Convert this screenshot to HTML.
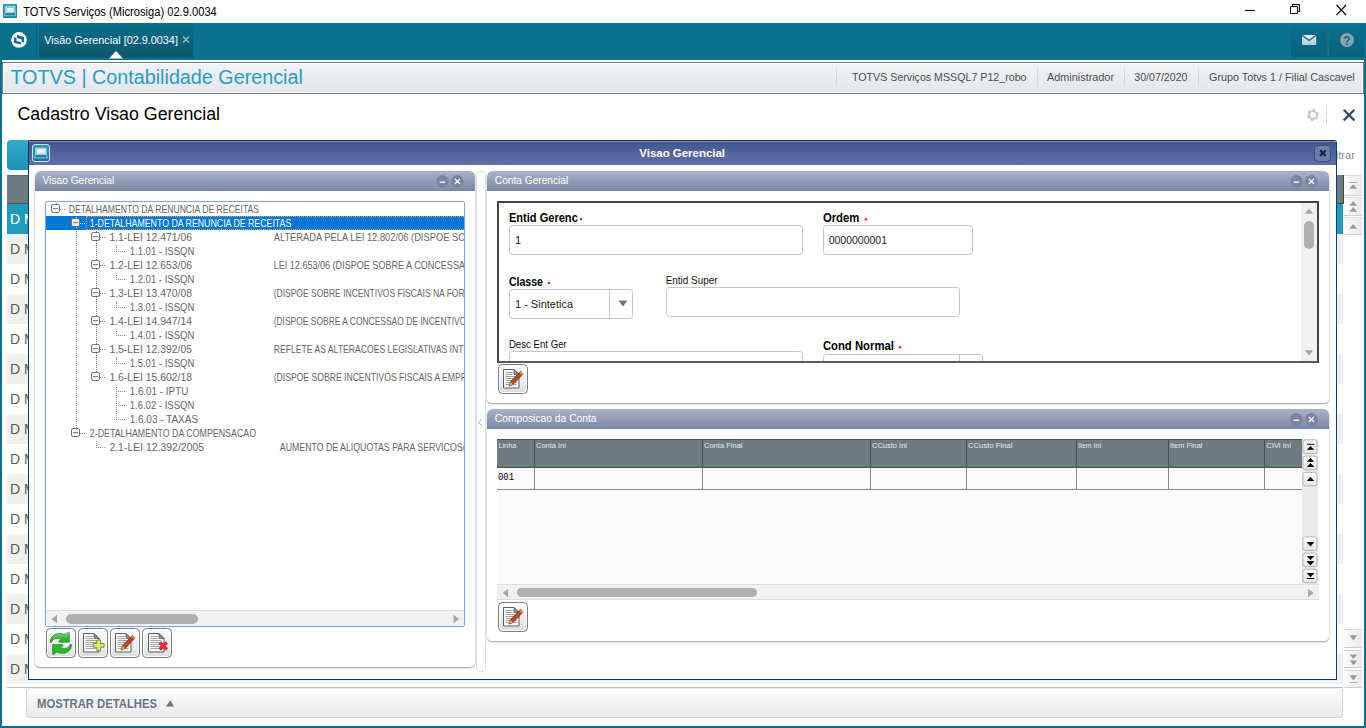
<!DOCTYPE html>
<html lang="pt-BR"><head><meta charset="utf-8"><title>TOTVS Serviços (Microsiga) 02.9.0034</title>
<style>
*{box-sizing:border-box;margin:0;padding:0}
html,body{width:1366px;height:728px;overflow:hidden;background:#fff}
body{position:relative;font-family:"Liberation Sans",sans-serif;font-size:12px;color:#000}
.a{position:absolute}
svg{position:absolute;left:0;top:0;overflow:visible}
svg text{font-family:"Liberation Sans",sans-serif;white-space:pre}
</style></head><body>
<div class="a" style="left:0px;top:0px;width:1366px;height:23px;background:#fff"></div>
<svg width="1366" height="728" viewBox="0 0 1366 728"><defs><linearGradient id="tg" x1="0" y1="0" x2="0" y2="1"><stop offset="0" stop-color="#249dbf"/><stop offset="1" stop-color="#0b789b"/></linearGradient><linearGradient id="sg" x1="0" y1="0" x2="0" y2="1"><stop offset="0" stop-color="#fff"/><stop offset="1" stop-color="#e4e4e4"/></linearGradient></defs><rect x="3" y="4" width="14" height="14" rx="0.800" fill="url(#tg)"/><path d="M5.200 6.300h9.800l0.200 6.200h-10.200z" fill="#8cc6d8" stroke="#c9e6ef" stroke-width="0.600"/><rect x="6.600" y="8" width="6.800" height="4" fill="url(#sg)"/><path d="M5 12.600h10.200l0.800 3.200h-11.800z" fill="#1586a8" stroke="#bfe0ea" stroke-width="0.700"/></svg>
<svg width="1366" height="728" viewBox="0 0 1366 728"><text x="23.2" y="16" font-size="12" fill="#000" textLength="193.6" lengthAdjust="spacingAndGlyphs">TOTVS Serviços (Microsiga) 02.9.0034</text><path d="M1245 10.500h10" stroke="#000" stroke-width="1" fill="none"/><path d="M1290.500 6.500h7v7h-7z M1292.500 6.500v-2h7v7h-2" stroke="#000" stroke-width="1" fill="none"/><path d="M1336.500 5l9.500 10M1346 5l-9.500 10" stroke="#000" stroke-width="1.100" fill="none"/></svg>
<div class="a" style="left:0px;top:23px;width:1366px;height:705px;background:#0a728e"></div>
<div class="a" style="left:0px;top:23px;width:37px;height:35px;background:linear-gradient(#0b7490,#0a6c87);border-right:1px solid #096079"></div>
<div class="a" style="left:39px;top:23px;width:154px;height:35px;background:linear-gradient(#0a6f8b,#0b566d)"></div>
<div class="a" style="left:1291px;top:23px;width:37px;height:34px;background:linear-gradient(#0a718e,#07627c);border-right:1px solid #34606f"></div>
<div class="a" style="left:1329px;top:23px;width:35px;height:34px;background:linear-gradient(#0a718e,#07627c)"></div>
<svg width="1366" height="728" viewBox="0 0 1366 728"><defs><linearGradient id="mg" x1="0" y1="0" x2="0" y2="1"><stop offset="0" stop-color="#e2ecf1"/><stop offset="1" stop-color="#b9cdd6"/></linearGradient></defs><circle cx="19" cy="39.900" r="7.800" fill="#fff"/><path d="M16.900 35.100L24 36.900V42.500L21.700 41.900V39.400L16.900 38.100Z M13.900 37.200L16.500 37.900V40.900L20.900 42V44.500L13.900 42.700Z" fill="#0a6f8b"/><path d="M109 58.500l7 -7.500l7 7.500z" fill="#fff"/><rect x="1302" y="35" width="14.200" height="10.100" rx="1.300" fill="url(#mg)"/><path d="M1302 35.200l7.100 5.300l7.100 -5.300" stroke="#0a6a86" stroke-width="1.400" fill="none"/><circle cx="1347" cy="40" r="7" fill="#89a2af"/><text x="1347" y="44.5" font-size="12" fill="#0a6882" font-weight="bold" text-anchor="middle">?</text><text x="44.3" y="44" font-size="11" fill="#fff" textLength="133.6" lengthAdjust="spacingAndGlyphs">Visão Gerencial [02.9.0034]</text><path d="M183 36.500l6 6M189 36.500l-6 6" stroke="#a5c6d2" stroke-width="1.100" fill="none"/></svg>
<div class="a" style="left:2px;top:60px;width:1362px;height:666px;background:#fff"></div>
<div class="a" style="left:2px;top:62px;width:1362px;height:32px;background:linear-gradient(#f1f3f6,#e2e6ea);border:1px solid #7a7a7a;box-shadow:inset 0 0 0 1px #fafbfc"></div>
<div class="a" style="left:836px;top:68px;width:1px;height:18px;background:#d6dade"></div>
<div class="a" style="left:1037px;top:68px;width:1px;height:18px;background:#d6dade"></div>
<div class="a" style="left:1124px;top:68px;width:1px;height:18px;background:#d6dade"></div>
<div class="a" style="left:1198px;top:68px;width:1px;height:18px;background:#d6dade"></div>
<svg width="1366" height="728" viewBox="0 0 1366 728"><text x="10.4" y="83.7" font-size="20" fill="#2a9cc5" textLength="292.5" lengthAdjust="spacingAndGlyphs">TOTVS | Contabilidade Gerencial</text><text x="852" y="81.2" font-size="11" fill="#4e4e4e" textLength="174.5" lengthAdjust="spacingAndGlyphs">TOTVS Serviços MSSQL7 P12_robo</text><text x="1047" y="81.2" font-size="11" fill="#4e4e4e" textLength="67" lengthAdjust="spacingAndGlyphs">Administrador</text><text x="1134.3" y="81.2" font-size="11" fill="#4e4e4e" textLength="53.2" lengthAdjust="spacingAndGlyphs">30/07/2020</text><text x="1209" y="81.2" font-size="11" fill="#4e4e4e" textLength="145.6" lengthAdjust="spacingAndGlyphs">Grupo Totvs 1 / Filial Cascavel</text><text x="17.5" y="119.5" font-size="17.5" fill="#000" textLength="202.5" lengthAdjust="spacingAndGlyphs">Cadastro Visao Gerencial</text><circle cx="1313" cy="115" r="3.900" fill="none" stroke="#c5c7cb" stroke-width="1.900"/><path d="M1313.63 111.45L1314.04 109.09M1316.38 113.77L1318.64 112.95M1315.76 117.31L1317.60 118.86M1312.37 118.55L1311.96 120.91M1309.62 116.23L1307.36 117.05M1310.24 112.69L1308.40 111.14" stroke="#c5c7cb" stroke-width="2.600" fill="none"/><path d="M1326.500 106v17" stroke="#b4b9c2" stroke-width="1" stroke-dasharray="1 1"/><path d="M1343.700 109.700l10.700 10.700M1354.400 109.700l-10.700 10.700" stroke="#3a4960" stroke-width="2.300" fill="none"/></svg>
<div class="a" style="left:7px;top:140px;width:60px;height:30px;border-radius:4px;background:linear-gradient(#35abc9,#1b93b6)"></div>
<svg width="1366" height="728" viewBox="0 0 1366 728"><text x="1354.8" y="158.8" font-size="11" fill="#7b8aa0" text-anchor="end">Filtrar</text></svg>
<div class="a" style="left:7px;top:175px;width:1336px;height:29px;background:#6d7c81;border-top:1px solid #5d6a6e;border-bottom:1px solid #4a5356"></div>
<div class="a" style="left:7px;top:204px;width:1336px;height:30px;background:#1f9bbd"></div>
<div class="a" style="left:7px;top:234px;width:1336px;height:30px;background:#f0f0f0"></div>
<div class="a" style="left:7px;top:264px;width:1336px;height:30px;background:#fff"></div>
<div class="a" style="left:7px;top:294px;width:1336px;height:30px;background:#f0f0f0"></div>
<div class="a" style="left:7px;top:324px;width:1336px;height:30px;background:#fff"></div>
<div class="a" style="left:7px;top:354px;width:1336px;height:30px;background:#f0f0f0"></div>
<div class="a" style="left:7px;top:384px;width:1336px;height:30px;background:#fff"></div>
<div class="a" style="left:7px;top:414px;width:1336px;height:30px;background:#f0f0f0"></div>
<div class="a" style="left:7px;top:444px;width:1336px;height:30px;background:#fff"></div>
<div class="a" style="left:7px;top:474px;width:1336px;height:30px;background:#f0f0f0"></div>
<div class="a" style="left:7px;top:504px;width:1336px;height:30px;background:#fff"></div>
<div class="a" style="left:7px;top:534px;width:1336px;height:30px;background:#f0f0f0"></div>
<div class="a" style="left:7px;top:564px;width:1336px;height:30px;background:#fff"></div>
<div class="a" style="left:7px;top:594px;width:1336px;height:30px;background:#f0f0f0"></div>
<div class="a" style="left:7px;top:624px;width:1336px;height:30px;background:#fff"></div>
<div class="a" style="left:7px;top:654px;width:1336px;height:30px;background:#f0f0f0"></div>
<div class="a" style="left:7px;top:684px;width:1336px;height:4px;background:#fff"></div>
<svg width="1366" height="728" viewBox="0 0 1366 728"><text x="10" y="224.1" font-size="14" fill="#fff">D M</text><text x="10" y="254.1" font-size="14" fill="#5a5a5a">D M</text><text x="10" y="284.1" font-size="14" fill="#5a5a5a">D M</text><text x="10" y="314.1" font-size="14" fill="#5a5a5a">D M</text><text x="10" y="344.1" font-size="14" fill="#5a5a5a">D M</text><text x="10" y="374.1" font-size="14" fill="#5a5a5a">D M</text><text x="10" y="404.1" font-size="14" fill="#5a5a5a">D M</text><text x="10" y="434.1" font-size="14" fill="#5a5a5a">D M</text><text x="10" y="464.1" font-size="14" fill="#5a5a5a">D M</text><text x="10" y="494.1" font-size="14" fill="#5a5a5a">D M</text><text x="10" y="524.1" font-size="14" fill="#5a5a5a">D M</text><text x="10" y="554.1" font-size="14" fill="#5a5a5a">D M</text><text x="10" y="584.1" font-size="14" fill="#5a5a5a">D M</text><text x="10" y="614.1" font-size="14" fill="#5a5a5a">D M</text><text x="10" y="644.1" font-size="14" fill="#5a5a5a">D M</text><text x="10" y="674.1" font-size="14" fill="#5a5a5a">D M</text></svg>
<div class="a" style="left:7px;top:687px;width:1336px;height:1px;background:#bbb"></div>
<div class="a" style="left:1337px;top:175px;width:7px;height:29px;background:#6d7c81;border-right:1px solid #444;border-bottom:1px solid #444"></div>
<div class="a" style="left:1344px;top:175px;width:18px;height:513px;background:#fff"></div>
<div class="a" style="left:1344px;top:175px;width:18px;height:20.5px;background:linear-gradient(90deg,#fbfbfb,#e9e9e9);border-top:1px solid #d9d9d9;border-bottom:1px solid #cfcfcf"></div>
<div class="a" style="left:1344px;top:197px;width:18px;height:18.5px;background:linear-gradient(90deg,#fbfbfb,#e9e9e9);border-top:1px solid #d9d9d9;border-bottom:1px solid #cfcfcf"></div>
<div class="a" style="left:1344px;top:217px;width:18px;height:17.5px;background:linear-gradient(90deg,#fbfbfb,#e9e9e9);border-top:1px solid #d9d9d9;border-bottom:1px solid #cfcfcf"></div>
<div class="a" style="left:1344px;top:628.5px;width:18px;height:19.5px;background:linear-gradient(90deg,#fbfbfb,#e9e9e9);border-top:1px solid #d9d9d9;border-bottom:1px solid #cfcfcf"></div>
<div class="a" style="left:1344px;top:649.5px;width:18px;height:18.5px;background:linear-gradient(90deg,#fbfbfb,#e9e9e9);border-top:1px solid #d9d9d9;border-bottom:1px solid #cfcfcf"></div>
<div class="a" style="left:1344px;top:670px;width:18px;height:17.5px;background:linear-gradient(90deg,#fbfbfb,#e9e9e9);border-top:1px solid #d9d9d9;border-bottom:1px solid #cfcfcf"></div>
<svg width="1366" height="728" viewBox="0 0 1366 728"><g fill="#9b9b9b"><path d="M1349 182h8v0.800h-8z M1353.200 184.200l3.900 4.600h-7.800z"/><path d="M1353.200 201l3.900 4.700h-7.800z M1353.200 207l3.900 4.700h-7.800z"/><path d="M1353.200 224l3.900 4.700h-7.800z"/><path d="M1353.400 640.500l3.800 -5.200h-7.600z"/><path d="M1353.400 659l3.800 -4.600h-7.600z M1353.400 665.200l3.800 -4.800h-7.600z"/><path d="M1353.400 680.500l3.800 -5.200h-7.600z M1349.500 682h7.800v0.800h-7.800z"/></g></svg>
<div class="a" style="left:26px;top:688px;width:1317px;height:30px;background:linear-gradient(#fcfcfc,#ebebeb);border:1px solid #d4d4d4;border-top-color:#ececec;border-radius:4px"></div>
<svg width="1366" height="728" viewBox="0 0 1366 728"><text x="37" y="707.5" font-size="12" fill="#66748a" font-weight="bold" textLength="120" lengthAdjust="spacingAndGlyphs">MOSTRAR DETALHES</text><path d="M166 706.500l4.100 -6.300l4.100 6.300z" fill="#66748a"/></svg>
<div class="a" style="left:28px;top:140px;width:1309px;height:540px;background:#fff;border:1px solid #0c3c6c;border-top-color:#2a2a2a;border-radius:2px 3px 0 0"></div>
<div class="a" style="left:29px;top:141px;width:1307px;height:24px;background:linear-gradient(#405590,#5f70a6);border-radius:1px 2px 0 0"></div>
<div class="a" style="left:29px;top:141px;width:1307px;height:1px;background:#8591bd"></div>
<div class="a" style="left:28px;top:142px;width:1px;height:23px;background:#2e2e2e"></div>
<svg width="1366" height="728" viewBox="0 0 1366 728"><rect x="32.500" y="144.500" width="17" height="17" rx="2.500" fill="url(#tg)" stroke="#dcdfec" stroke-width="1"/><path d="M35.600 148h10.600l0.300 6.300h-11.200z" fill="#8fcadb" stroke="#d3ebf2" stroke-width="0.600"/><rect x="37" y="149.300" width="8.100" height="4.500" fill="url(#sg)"/><path d="M35.300 154.500h11.200l0.800 3.400h-12.800z" fill="#1485a8" stroke="#c7e4ec" stroke-width="0.700"/></svg>
<div class="a" style="left:1314px;top:144.5px;width:17px;height:17.5px;border:1px solid #3a4b7c;border-radius:4px;background:#6d7db0"></div>
<svg width="1366" height="728" viewBox="0 0 1366 728"><text x="639.3" y="156.8" font-size="11" fill="#fff" font-weight="bold" textLength="85.7" lengthAdjust="spacingAndGlyphs">Visao Gerencial</text><path d="M1320.100 150.300l5.600 5.600M1325.700 150.300l-5.600 5.600" stroke="#1c2444" stroke-width="2.200" fill="none"/></svg>
<div class="a" style="left:35px;top:171px;width:439.5px;height:496px;background:#fff;border-radius:6px 6px 5px 5px;box-shadow:0 1px 2px rgba(0,0,0,.4)"></div>
<div class="a" style="left:35px;top:171px;width:439.5px;height:19.8px;border-radius:6px 6px 0 0;background:linear-gradient(#a9b3c8,#7a88a7)"></div>
<svg width="1366" height="728" viewBox="0 0 1366 728"><circle cx="442.4" cy="181.4" r="6.300" fill="#7886a3"/><circle cx="457.4" cy="181.4" r="6.300" fill="#7886a3"/><path d="M439.7 182.2h5.400" stroke="#fff" stroke-width="1.300"/><path d="M454.8 178.8l5.200 5.200M460 178.8l-5.200 5.200" stroke="#fff" stroke-width="1.200"/><text x="42.5" y="183.9" font-size="11.5" fill="#fff" textLength="71.8" lengthAdjust="spacingAndGlyphs">Visao Gerencial</text></svg>
<div class="a" style="left:487px;top:171px;width:842px;height:232px;background:#fff;border-radius:6px 6px 5px 5px;box-shadow:0 1px 2px rgba(0,0,0,.4)"></div>
<div class="a" style="left:487px;top:171px;width:842px;height:19.8px;border-radius:6px 6px 0 0;background:linear-gradient(#a9b3c8,#7a88a7)"></div>
<svg width="1366" height="728" viewBox="0 0 1366 728"><circle cx="1296.4" cy="181.4" r="6.300" fill="#7886a3"/><circle cx="1311.4" cy="181.4" r="6.300" fill="#7886a3"/><path d="M1293.7 182.2h5.400" stroke="#fff" stroke-width="1.300"/><path d="M1308.8 178.8l5.200 5.200M1314 178.8l-5.200 5.200" stroke="#fff" stroke-width="1.200"/><text x="494.8" y="184.2" font-size="11.5" fill="#fff" textLength="73.5" lengthAdjust="spacingAndGlyphs">Conta Gerencial</text></svg>
<div class="a" style="left:487px;top:409px;width:842px;height:232px;background:#fff;border-radius:6px 6px 5px 5px;box-shadow:0 1px 2px rgba(0,0,0,.4)"></div>
<div class="a" style="left:487px;top:409px;width:842px;height:19.8px;border-radius:6px 6px 0 0;background:linear-gradient(#a9b3c8,#7a88a7)"></div>
<svg width="1366" height="728" viewBox="0 0 1366 728"><circle cx="1296.4" cy="419.4" r="6.300" fill="#7886a3"/><circle cx="1311.4" cy="419.4" r="6.300" fill="#7886a3"/><path d="M1293.7 420.2h5.400" stroke="#fff" stroke-width="1.300"/><path d="M1308.8 416.8l5.200 5.200M1314 416.8l-5.200 5.200" stroke="#fff" stroke-width="1.200"/><text x="494.8" y="422.3" font-size="11.5" fill="#fff" textLength="101.8" lengthAdjust="spacingAndGlyphs">Composicao da Conta</text></svg>
<div class="a" style="left:476px;top:171px;width:9.5px;height:500.5px;background:#fff;border:1px solid #e0e0e0;border-radius:4px"></div>
<svg width="1366" height="728" viewBox="0 0 1366 728"><path d="M482 419L478.300 422.400L482 425.900" stroke="#bcaebc" stroke-width="1" fill="none"/></svg>
<div class="a" style="left:45px;top:201px;width:420px;height:426px;background:#fff;border:1px solid #7aa6f0;border-radius:2px"></div>
<div class="a" style="left:46px;top:216px;width:418px;height:14px;background:#0078d7"></div>
<div class="a" style="left:86px;top:216px;width:378px;height:14px;border:1px dotted #e8a040;border-right:none"></div>
<svg width="1366" height="728" viewBox="0 0 1366 728"><defs><clipPath id="tc"><rect x="46" y="202" width="418" height="408.500"/></clipPath></defs><g clip-path="url(#tc)"><path d="M76.500 231V428" stroke="#8c8c8c" stroke-width="1" stroke-dasharray="1 1"/><path d="M96.500 241V372" stroke="#8c8c8c" stroke-width="1" stroke-dasharray="1 1"/><path d="M56.5 203v2" stroke="#8c8c8c" stroke-width="1"/><path d="M60 209.5h5" stroke="#8c8c8c" stroke-width="1" stroke-dasharray="1 1"/><rect x="51.5" y="204.5" width="8" height="8" rx="1.500" fill="#fdfdfd" stroke="#727272" stroke-width="1"/><path d="M53 208.5h5" stroke="#8a8a8a" stroke-width="1"/><path d="M53 209.5h5" stroke="#dcdcdc" stroke-width="1"/><text x="68.7" y="213" font-size="10.5" fill="#666" textLength="190.4" lengthAdjust="spacingAndGlyphs">DETALHAMENTO DA RENUNCIA DE RECEITAS</text><path d="M76.5 217v11" stroke="#d8e6f8" stroke-width="1"/><path d="M80 223.5h5" stroke="#d8e6f8" stroke-width="1" stroke-dasharray="1 1"/><rect x="71.5" y="218.5" width="8" height="8" rx="1.500" fill="#ececec" stroke="#727272" stroke-width="1"/><path d="M73 222.5h5" stroke="#8a8a8a" stroke-width="1"/><path d="M73 223.5h5" stroke="#dcdcdc" stroke-width="1"/><text x="89.8" y="227" font-size="10.5" fill="#fff" textLength="201.5" lengthAdjust="spacingAndGlyphs">1-DETALHAMENTO DA RENUNCIA DE RECEITAS</text><path d="M96.5 231v11" stroke="#8c8c8c" stroke-width="1"/><path d="M100 237.5h5" stroke="#8c8c8c" stroke-width="1" stroke-dasharray="1 1"/><rect x="91.5" y="232.5" width="8" height="8" rx="1.500" fill="#fdfdfd" stroke="#727272" stroke-width="1"/><path d="M93 236.5h5" stroke="#8a8a8a" stroke-width="1"/><path d="M93 237.5h5" stroke="#dcdcdc" stroke-width="1"/><text x="109.4" y="241" font-size="10.5" fill="#666" textLength="82.6" lengthAdjust="spacingAndGlyphs">1.1-LEI 12.471/06</text><text x="273.7" y="241" font-size="10.5" fill="#666" textLength="191.8" lengthAdjust="spacingAndGlyphs">ALTERADA PELA LEI 12.802/06 (DISPOE SO</text><path d="M116.500 245V252" stroke="#8c8c8c" stroke-width="1" stroke-dasharray="1 1"/><path d="M116 251.5h9" stroke="#8c8c8c" stroke-width="1" stroke-dasharray="1 1"/><text x="129.7" y="255" font-size="10.5" fill="#666" textLength="64.7" lengthAdjust="spacingAndGlyphs">1.1.01 - ISSQN</text><path d="M96.5 259v11" stroke="#8c8c8c" stroke-width="1"/><path d="M100 265.5h5" stroke="#8c8c8c" stroke-width="1" stroke-dasharray="1 1"/><rect x="91.5" y="260.5" width="8" height="8" rx="1.500" fill="#fdfdfd" stroke="#727272" stroke-width="1"/><path d="M93 264.5h5" stroke="#8a8a8a" stroke-width="1"/><path d="M93 265.5h5" stroke="#dcdcdc" stroke-width="1"/><text x="109.4" y="269" font-size="10.5" fill="#666" textLength="82.6" lengthAdjust="spacingAndGlyphs">1.2-LEI 12.653/06</text><text x="273.7" y="269" font-size="10.5" fill="#666" textLength="191.3" lengthAdjust="spacingAndGlyphs">LEI 12.653/06 (DISPOE SOBRE A CONCESSA</text><path d="M116.500 273V280" stroke="#8c8c8c" stroke-width="1" stroke-dasharray="1 1"/><path d="M116 279.5h9" stroke="#8c8c8c" stroke-width="1" stroke-dasharray="1 1"/><text x="129.7" y="283" font-size="10.5" fill="#666" textLength="64.7" lengthAdjust="spacingAndGlyphs">1.2.01 - ISSQN</text><path d="M96.5 287v11" stroke="#8c8c8c" stroke-width="1"/><path d="M100 293.5h5" stroke="#8c8c8c" stroke-width="1" stroke-dasharray="1 1"/><rect x="91.5" y="288.5" width="8" height="8" rx="1.500" fill="#fdfdfd" stroke="#727272" stroke-width="1"/><path d="M93 292.5h5" stroke="#8a8a8a" stroke-width="1"/><path d="M93 293.5h5" stroke="#dcdcdc" stroke-width="1"/><text x="109.4" y="297" font-size="10.5" fill="#666" textLength="82.6" lengthAdjust="spacingAndGlyphs">1.3-LEI 13.470/08</text><text x="273.7" y="297" font-size="10.5" fill="#666" textLength="190.9" lengthAdjust="spacingAndGlyphs">(DISPOE SOBRE INCENTIVOS FISCAIS NA FOR</text><path d="M116.500 301V308" stroke="#8c8c8c" stroke-width="1" stroke-dasharray="1 1"/><path d="M116 307.5h9" stroke="#8c8c8c" stroke-width="1" stroke-dasharray="1 1"/><text x="129.7" y="311" font-size="10.5" fill="#666" textLength="64.7" lengthAdjust="spacingAndGlyphs">1.3.01 - ISSQN</text><path d="M96.5 315v11" stroke="#8c8c8c" stroke-width="1"/><path d="M100 321.5h5" stroke="#8c8c8c" stroke-width="1" stroke-dasharray="1 1"/><rect x="91.5" y="316.5" width="8" height="8" rx="1.500" fill="#fdfdfd" stroke="#727272" stroke-width="1"/><path d="M93 320.5h5" stroke="#8a8a8a" stroke-width="1"/><path d="M93 321.5h5" stroke="#dcdcdc" stroke-width="1"/><text x="109.4" y="325" font-size="10.5" fill="#666" textLength="82.6" lengthAdjust="spacingAndGlyphs">1.4-LEI 14.947/14</text><text x="273.7" y="325" font-size="10.5" fill="#666" textLength="192.6" lengthAdjust="spacingAndGlyphs">(DISPOE SOBRE A CONCESSAO DE INCENTIVO</text><path d="M116.500 329V336" stroke="#8c8c8c" stroke-width="1" stroke-dasharray="1 1"/><path d="M116 335.5h9" stroke="#8c8c8c" stroke-width="1" stroke-dasharray="1 1"/><text x="129.7" y="339" font-size="10.5" fill="#666" textLength="64.7" lengthAdjust="spacingAndGlyphs">1.4.01 - ISSQN</text><path d="M96.5 343v11" stroke="#8c8c8c" stroke-width="1"/><path d="M100 349.5h5" stroke="#8c8c8c" stroke-width="1" stroke-dasharray="1 1"/><rect x="91.5" y="344.5" width="8" height="8" rx="1.500" fill="#fdfdfd" stroke="#727272" stroke-width="1"/><path d="M93 348.5h5" stroke="#8a8a8a" stroke-width="1"/><path d="M93 349.5h5" stroke="#dcdcdc" stroke-width="1"/><text x="109.4" y="353" font-size="10.5" fill="#666" textLength="82.6" lengthAdjust="spacingAndGlyphs">1.5-LEI 12.392/05</text><text x="273.7" y="353" font-size="10.5" fill="#666" textLength="189.8" lengthAdjust="spacingAndGlyphs">REFLETE AS ALTERACOES LEGISLATIVAS INT</text><path d="M116.500 357V364" stroke="#8c8c8c" stroke-width="1" stroke-dasharray="1 1"/><path d="M116 363.5h9" stroke="#8c8c8c" stroke-width="1" stroke-dasharray="1 1"/><text x="129.7" y="367" font-size="10.5" fill="#666" textLength="64.7" lengthAdjust="spacingAndGlyphs">1.5.01 - ISSQN</text><path d="M96.5 371v2" stroke="#8c8c8c" stroke-width="1"/><path d="M100 377.5h5" stroke="#8c8c8c" stroke-width="1" stroke-dasharray="1 1"/><rect x="91.5" y="372.5" width="8" height="8" rx="1.500" fill="#fdfdfd" stroke="#727272" stroke-width="1"/><path d="M93 376.5h5" stroke="#8a8a8a" stroke-width="1"/><path d="M93 377.5h5" stroke="#dcdcdc" stroke-width="1"/><text x="109.4" y="381" font-size="10.5" fill="#666" textLength="82.6" lengthAdjust="spacingAndGlyphs">1.6-LEI 15.602/18</text><text x="273.7" y="381" font-size="10.5" fill="#666" textLength="193.3" lengthAdjust="spacingAndGlyphs">(DISPOE SOBRE INCENTIVOS FISCAIS A EMPR</text><path d="M116.500 385V399" stroke="#8c8c8c" stroke-width="1" stroke-dasharray="1 1"/><path d="M116 391.5h9" stroke="#8c8c8c" stroke-width="1" stroke-dasharray="1 1"/><text x="129.7" y="395" font-size="10.5" fill="#666" textLength="58.6" lengthAdjust="spacingAndGlyphs">1.6.01 - IPTU</text><path d="M116.500 399V413" stroke="#8c8c8c" stroke-width="1" stroke-dasharray="1 1"/><path d="M116 405.5h9" stroke="#8c8c8c" stroke-width="1" stroke-dasharray="1 1"/><text x="129.7" y="409" font-size="10.5" fill="#666" textLength="64.7" lengthAdjust="spacingAndGlyphs">1.6.02 - ISSQN</text><path d="M116.500 413V420" stroke="#8c8c8c" stroke-width="1" stroke-dasharray="1 1"/><path d="M116 419.5h9" stroke="#8c8c8c" stroke-width="1" stroke-dasharray="1 1"/><text x="129.7" y="423" font-size="10.5" fill="#666" textLength="68.4" lengthAdjust="spacingAndGlyphs">1.6.03 - TAXAS</text><path d="M76.5 427v2" stroke="#8c8c8c" stroke-width="1"/><path d="M80 433.5h5" stroke="#8c8c8c" stroke-width="1" stroke-dasharray="1 1"/><rect x="71.5" y="428.5" width="8" height="8" rx="1.500" fill="#fdfdfd" stroke="#727272" stroke-width="1"/><path d="M73 432.5h5" stroke="#8a8a8a" stroke-width="1"/><path d="M73 433.5h5" stroke="#dcdcdc" stroke-width="1"/><text x="89.8" y="437" font-size="10.5" fill="#666" textLength="166.3" lengthAdjust="spacingAndGlyphs">2-DETALHAMENTO DA COMPENSACAO</text><path d="M96.500 441V448" stroke="#8c8c8c" stroke-width="1" stroke-dasharray="1 1"/><path d="M96 447.5h9" stroke="#8c8c8c" stroke-width="1" stroke-dasharray="1 1"/><text x="109.4" y="451" font-size="10.5" fill="#666" textLength="94.7" lengthAdjust="spacingAndGlyphs">2.1-LEI 12.392/2005</text><text x="279.8" y="451" font-size="10.5" fill="#666" textLength="185.2" lengthAdjust="spacingAndGlyphs">AUMENTO DE ALIQUOTAS PARA SERVICOS/</text></g></svg>
<div class="a" style="left:46px;top:610px;width:418px;height:16px;background:#f1f1f1;border-top:1px solid #dedede"></div>
<div class="a" style="left:66px;top:614.3px;width:132px;height:9.4px;background:#b0b0b0;border-radius:5px"></div>
<svg width="1366" height="728" viewBox="0 0 1366 728"><path d="M57 614.800l-5.500 4.200l5.500 4.300z M453.500 614.800l5.500 4.200l-5.500 4.300z" fill="#a3a3a3"/></svg>
<div class="a" style="left:46px;top:628px;width:30px;height:30px;border:1px solid #7c7c7c;border-radius:4.500px;background:linear-gradient(#fefefe,#dedede);box-shadow:inset 0 0 0 1px #fff"></div>
<div class="a" style="left:78px;top:628px;width:30px;height:30px;border:1px solid #7c7c7c;border-radius:4.500px;background:linear-gradient(#fefefe,#dedede);box-shadow:inset 0 0 0 1px #fff"></div>
<div class="a" style="left:110px;top:628px;width:30px;height:30px;border:1px solid #7c7c7c;border-radius:4.500px;background:linear-gradient(#fefefe,#dedede);box-shadow:inset 0 0 0 1px #fff"></div>
<div class="a" style="left:142px;top:628px;width:30px;height:30px;border:1px solid #7c7c7c;border-radius:4.500px;background:linear-gradient(#fefefe,#dedede);box-shadow:inset 0 0 0 1px #fff"></div>
<svg width="1366" height="728" viewBox="0 0 1366 728"><defs><linearGradient id="gg" x1="0" y1="0" x2="0" y2="1"><stop offset="0" stop-color="#8be08b"/><stop offset="0.600" stop-color="#2fba2f"/><stop offset="1" stop-color="#25ad25"/></linearGradient></defs><g transform="translate(44,626)"><path d="M6.100 16.300Q6.300 11 10.500 8.600Q15 6.200 21.200 8.500L24.600 6L25.300 6.600V16.200H15.500L14.600 15L17.600 13.600Q14 11.300 10.500 12.800Q8.300 14 7.400 16.600Z" fill="url(#gg)" stroke="#3a7a4a" stroke-width="0.700"/><path d="M6.100 16.300Q6.300 11 10.500 8.600Q15 6.200 21.200 8.500L24.600 6L25.300 6.600V16.200H15.500L14.600 15L17.600 13.600Q14 11.300 10.500 12.800Q8.300 14 7.400 16.600Z" transform="rotate(180 16.900 17.400)" fill="#2cb62c" stroke="#3a7a4a" stroke-width="0.700"/></g><g transform="translate(83,633)"><path d="M0.500 0.500h10.500l5 5v13.500h-15.500z" fill="#fbfbfb" stroke="#5f5f5f" stroke-width="1"/><path d="M11 0.500v5h5z" fill="#8c8c8c" stroke="#5f5f5f" stroke-width="0.800"/><path d="M2.500 3.500h7M2.500 5.500h7M2.500 7.500h11M2.500 9.500h11M2.500 11.500h11M2.500 13.500h11M2.500 15.500h11" stroke="#9a9a9a" stroke-width="0.900"/><path d="M13.800 7h3.600v3.600h3.600v3.600h-3.600v3.600h-3.600v-3.600h-3.600v-3.600h3.600z" fill="#dcf466" stroke="#6b7a55" stroke-width="0.900"/></g><g transform="translate(115,633)"><path d="M0.500 0.500h10.500l5 5v13.500h-15.500z" fill="#fbfbfb" stroke="#5f5f5f" stroke-width="1"/><path d="M11 0.500v5h5z" fill="#8c8c8c" stroke="#5f5f5f" stroke-width="0.800"/><path d="M2.500 3.500h7M2.500 5.500h7M2.500 7.500h11M2.500 9.500h11M2.500 11.500h11M2.500 13.500h11M2.500 15.500h11" stroke="#9a9a9a" stroke-width="0.900"/><path d="M6 17l1.500 -4.200l10 -10.500l2.700 2.600l-10 10.500z" fill="#b5482c" stroke="#7a2d18" stroke-width="0.700"/><path d="M6 17l1.500 -4.200l2.700 2.600z" fill="#f0c070" stroke="#8a5a20" stroke-width="0.500"/><path d="M16.300 3.600l2.700 2.600l1.300-1.400l-2.700-2.600z" fill="#d9a050"/></g><g transform="translate(148,633)"><path d="M0.500 0.500h10.500l5 5v13.500h-15.500z" fill="#fbfbfb" stroke="#5f5f5f" stroke-width="1"/><path d="M11 0.500v5h5z" fill="#8c8c8c" stroke="#5f5f5f" stroke-width="0.800"/><path d="M2.500 3.500h7M2.500 5.500h7M2.500 7.500h11M2.500 9.500h11M2.500 11.500h11M2.500 13.500h11M2.500 15.500h11" stroke="#9a9a9a" stroke-width="0.900"/><path d="M11.800 9.500l7 7M18.800 9.500l-7 7" stroke="#a03a44" stroke-width="3.400"/><path d="M11.800 9.500l7 7M18.800 9.500l-7 7" stroke="#f42a3c" stroke-width="2.300"/></g></svg>
<div class="a" style="left:497px;top:201px;width:822px;height:162px;background:#fff;border:2px solid #444;border-bottom-color:#5a5a5a;overflow:hidden">
<div class="a" style="left:10px;top:22px;width:294px;height:30px;border:1px solid #c6c6c6;border-radius:3.500px;background:#fff"></div>
<div class="a" style="left:324px;top:22px;width:150px;height:30px;border:1px solid #c6c6c6;border-radius:3.500px;background:#fff"></div>
<div class="a" style="left:10px;top:86px;width:124px;height:30px;border:1px solid #c6c6c6;border-radius:3.500px;background:#fff"><div class="a" style="left:99px;top:0;width:1px;height:28px;background:#c6c6c6"></div></div>
<div class="a" style="left:167px;top:84px;width:294px;height:30px;border:1px solid #c6c6c6;border-radius:3.500px;background:#fff"></div>
<div class="a" style="left:10px;top:148px;width:294px;height:30px;border:1px solid #c6c6c6;border-radius:3.500px;background:#fff"></div>
<div class="a" style="left:324px;top:151px;width:160px;height:30px;border:1px solid #c6c6c6;border-radius:3.500px;background:#fff"><div class="a" style="left:135px;top:0;width:1px;height:28px;background:#c6c6c6"></div></div>
<svg width="818" height="158" viewBox="499 203 818 158" style="left:0;top:0"><text x="515" y="244" font-size="11" fill="#1a1020">1</text><text x="828.7" y="244" font-size="11" fill="#1c1c1c" textLength="58.3" lengthAdjust="spacingAndGlyphs">0000000001</text><text x="515" y="307.8" font-size="11" fill="#1c1c1c" textLength="58" lengthAdjust="spacingAndGlyphs">1 - Sintetica</text><path d="M618.500 300.500h9l-4.500 6z" fill="#6b7280"/><text x="508.9" y="222" font-size="12.5" fill="#000" font-weight="bold" textLength="68.9" lengthAdjust="spacingAndGlyphs">Entid Gerenc</text><text x="822.9" y="222" font-size="12.5" fill="#000" font-weight="bold" textLength="36.5" lengthAdjust="spacingAndGlyphs">Ordem</text><text x="508.9" y="285.7" font-size="12.5" fill="#000" font-weight="bold" textLength="34" lengthAdjust="spacingAndGlyphs">Classe</text><text x="822.9" y="350" font-size="12.5" fill="#000" font-weight="bold" textLength="71" lengthAdjust="spacingAndGlyphs">Cond Normal</text><text x="665.7" y="284.4" font-size="11" fill="#111" textLength="51.8" lengthAdjust="spacingAndGlyphs">Entid Super</text><text x="508.9" y="348" font-size="11" fill="#111" textLength="57.9" lengthAdjust="spacingAndGlyphs">Desc Ent Ger</text><g fill="#f5204a"><circle cx="581" cy="219" r="1.300"/><circle cx="866" cy="219.300" r="1.300"/><circle cx="549" cy="283" r="1.300"/><circle cx="900" cy="347.300" r="1.300"/></g><rect x="1301" y="203" width="17" height="159" fill="#f1f1f1"/><path d="M1309 208.600l4.100 5.200h-8.200z M1309 355.500l4.100 -5.300h-8.200z" fill="#a3a3a3"/><rect x="1304" y="221" width="10" height="28" rx="5" fill="#b0b0b0"/></svg>
</div>
<div class="a" style="left:498px;top:364px;width:30px;height:30px;border:1px solid #7c7c7c;border-radius:4.500px;background:linear-gradient(#fefefe,#dedede);box-shadow:inset 0 0 0 1px #fff"></div>
<svg width="1366" height="728" viewBox="0 0 1366 728"><g transform="translate(503,369)"><path d="M0.500 0.500h10.500l5 5v13.500h-15.500z" fill="#fbfbfb" stroke="#5f5f5f" stroke-width="1"/><path d="M11 0.500v5h5z" fill="#8c8c8c" stroke="#5f5f5f" stroke-width="0.800"/><path d="M2.500 3.500h7M2.500 5.500h7M2.500 7.500h11M2.500 9.500h11M2.500 11.500h11M2.500 13.500h11M2.500 15.500h11" stroke="#9a9a9a" stroke-width="0.900"/><path d="M6 17l1.500 -4.200l10 -10.500l2.700 2.600l-10 10.500z" fill="#b5482c" stroke="#7a2d18" stroke-width="0.700"/><path d="M6 17l1.500 -4.200l2.700 2.600z" fill="#f0c070" stroke="#8a5a20" stroke-width="0.500"/><path d="M16.300 3.600l2.700 2.600l1.300-1.400l-2.700-2.600z" fill="#d9a050"/></g></svg>
<div class="a" style="left:497px;top:439px;width:822px;height:161px;background:#fafafa"></div>
<div class="a" style="left:497px;top:439px;width:805px;height:29px;background:#6e7c81;border-top:1px solid #4a565a"></div>
<svg width="1366" height="728" viewBox="0 0 1366 728"><path d="M534.5 440V467" stroke="#465155" stroke-width="1"/><path d="M534.5 468V489" stroke="#8a8a8a" stroke-width="1"/><path d="M702.5 440V467" stroke="#465155" stroke-width="1"/><path d="M702.5 468V489" stroke="#8a8a8a" stroke-width="1"/><path d="M870.5 440V467" stroke="#465155" stroke-width="1"/><path d="M870.5 468V489" stroke="#8a8a8a" stroke-width="1"/><path d="M966.5 440V467" stroke="#465155" stroke-width="1"/><path d="M966.5 468V489" stroke="#8a8a8a" stroke-width="1"/><path d="M1076.5 440V467" stroke="#465155" stroke-width="1"/><path d="M1076.5 468V489" stroke="#8a8a8a" stroke-width="1"/><path d="M1168.5 440V467" stroke="#465155" stroke-width="1"/><path d="M1168.5 468V489" stroke="#8a8a8a" stroke-width="1"/><path d="M1264.5 440V467" stroke="#465155" stroke-width="1"/><path d="M1264.5 468V489" stroke="#8a8a8a" stroke-width="1"/><path d="M497 467.500H1302" stroke="#465155" stroke-width="1"/><path d="M497 489.500H1302" stroke="#8a8a8a" stroke-width="1"/><text x="498.4" y="448.1" font-size="8" fill="#e4e9ea" textLength="18" lengthAdjust="spacingAndGlyphs">Linha</text><text x="536" y="448.1" font-size="8" fill="#e4e9ea" textLength="29.9" lengthAdjust="spacingAndGlyphs">Conta Ini</text><text x="704" y="448.1" font-size="8" fill="#e4e9ea" textLength="38.5" lengthAdjust="spacingAndGlyphs">Conta Final</text><text x="872" y="448.1" font-size="8" fill="#e4e9ea" textLength="35" lengthAdjust="spacingAndGlyphs">CCusto Ini</text><text x="968" y="448.1" font-size="8" fill="#e4e9ea" textLength="44.5" lengthAdjust="spacingAndGlyphs">CCusto Final</text><text x="1078" y="448.1" font-size="8" fill="#e4e9ea" textLength="23" lengthAdjust="spacingAndGlyphs">Item Ini</text><text x="1170" y="448.1" font-size="8" fill="#e4e9ea" textLength="32.5" lengthAdjust="spacingAndGlyphs">Item Final</text><text x="1266.3" y="448.1" font-size="8" fill="#e4e9ea" textLength="24.6" lengthAdjust="spacingAndGlyphs">ClVl Ini</text><text x="497.9" y="480.1" font-size="11.5" fill="#0c0018" style="font-family:'Liberation Mono',monospace" textLength="16.2" lengthAdjust="spacingAndGlyphs">001</text></svg>
<div class="a" style="left:1302px;top:439px;width:16px;height:145px;background:#ebebeb"></div>
<svg width="1366" height="728" viewBox="0 0 1366 728"><defs><linearGradient id="bg" x1="0" y1="0" x2="0" y2="1"><stop offset="0" stop-color="#ffffff"/><stop offset="1" stop-color="#e4e4e4"/></linearGradient></defs><rect x="1302.900" y="439.9" width="14.100" height="13.600" rx="2.500" fill="url(#bg)" stroke="#b2b2b2" stroke-width="1"/><rect x="1302.900" y="456.1" width="14.100" height="13.600" rx="2.500" fill="url(#bg)" stroke="#b2b2b2" stroke-width="1"/><rect x="1302.900" y="472.3" width="14.100" height="13.600" rx="2.500" fill="url(#bg)" stroke="#b2b2b2" stroke-width="1"/><rect x="1302.900" y="536.9" width="14.100" height="13.600" rx="2.500" fill="url(#bg)" stroke="#b2b2b2" stroke-width="1"/><rect x="1302.900" y="553" width="14.100" height="13.600" rx="2.500" fill="url(#bg)" stroke="#b2b2b2" stroke-width="1"/><rect x="1302.900" y="569.2" width="14.100" height="13.600" rx="2.500" fill="url(#bg)" stroke="#b2b2b2" stroke-width="1"/><g fill="#000"><path d="M1306.900 443.800h7.200v1h-7.200z M1310.500 446l3.700 3.800h-7.400z"/><path d="M1310.500 458l3.700 3.700h-7.400z M1310.500 462.900l3.700 4.100h-7.400z"/><path d="M1310.500 476.900l3.700 4.100h-7.400z"/><path d="M1310.500 546.500l3.900 -4.600h-7.800z"/><path d="M1310.500 559.900l3.900 -3.800h-7.800z M1310.500 565.400l3.900 -4.300h-7.800z"/><path d="M1310.500 577.300l3.900 -4.200h-7.800z M1306.700 578h7.600v1h-7.600z"/></g></svg>
<div class="a" style="left:497px;top:584px;width:822px;height:16px;background:#f1f1f1;border-top:1px solid #dcdcdc;border-bottom:1px solid #dcdcdc"></div>
<div class="a" style="left:517.3px;top:588.3px;width:240px;height:9px;background:#b0b0b0;border-radius:5px"></div>
<svg width="1366" height="728" viewBox="0 0 1366 728"><path d="M508 588.700l-5.300 4.300l5.300 4.300z M1308.100 588.700l5.500 4.300l-5.500 4.300z" fill="#a6a6a6"/></svg>
<div class="a" style="left:498px;top:602px;width:30px;height:30px;border:1px solid #7c7c7c;border-radius:4.500px;background:linear-gradient(#fefefe,#dedede);box-shadow:inset 0 0 0 1px #fff"></div>
<svg width="1366" height="728" viewBox="0 0 1366 728"><g transform="translate(503,607)"><path d="M0.500 0.500h10.500l5 5v13.500h-15.500z" fill="#fbfbfb" stroke="#5f5f5f" stroke-width="1"/><path d="M11 0.500v5h5z" fill="#8c8c8c" stroke="#5f5f5f" stroke-width="0.800"/><path d="M2.500 3.500h7M2.500 5.500h7M2.500 7.500h11M2.500 9.500h11M2.500 11.500h11M2.500 13.500h11M2.500 15.500h11" stroke="#9a9a9a" stroke-width="0.900"/><path d="M6 17l1.500 -4.200l10 -10.500l2.700 2.600l-10 10.500z" fill="#b5482c" stroke="#7a2d18" stroke-width="0.700"/><path d="M6 17l1.500 -4.200l2.700 2.600z" fill="#f0c070" stroke="#8a5a20" stroke-width="0.500"/><path d="M16.300 3.600l2.700 2.600l1.300-1.400l-2.700-2.600z" fill="#d9a050"/></g></svg>
<div class="a" style="left:0px;top:58px;width:2px;height:670px;background:#0a728e"></div>
<div class="a" style="left:1364px;top:23px;width:2px;height:705px;background:#0a728e"></div>
<div class="a" style="left:0px;top:726px;width:1366px;height:2px;background:#0a728e"></div>
</body></html>
